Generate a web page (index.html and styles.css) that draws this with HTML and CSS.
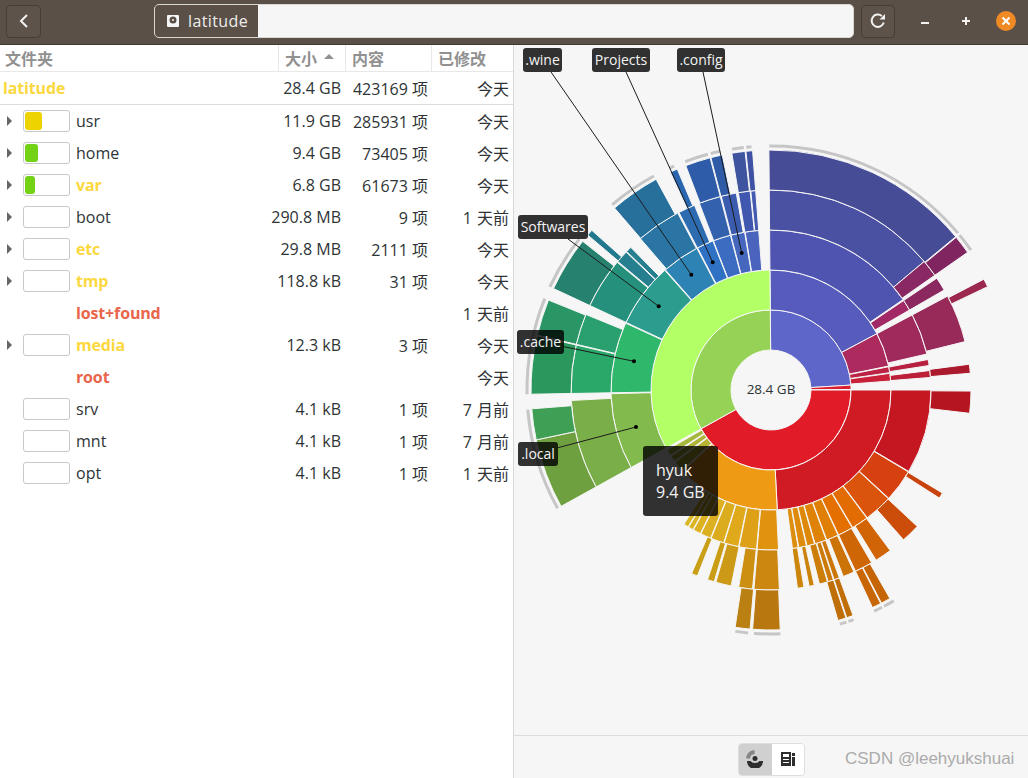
FILE: index.html
```html
<!DOCTYPE html>
<html>
<head>
    <title>latitude</title>
    <link rel="stylesheet" href="styles.css">
</head>
<body>

<!-- Header bar -->
<div class="headerbar">
    <button class="head-btn back-btn">
        <svg width="14" height="16" viewBox="0 0 14 16" fill="none"><path d="M10 2 L4 8 L10 14" stroke="#f4f2f0" stroke-width="2"/></svg>
    </button>
    <div class="location">
        <div class="crumb">
            <svg width="14" height="14" viewBox="0 0 14 14"><path fill-rule="evenodd" fill="#f6f6f6" d="M2 1h10a1 1 0 0 1 1 1v10a1 1 0 0 1-1 1H2a1 1 0 0 1-1-1V2a1 1 0 0 1 1-1zM7 2.500a3.500 3.500 0 1 0 0 7a3.500 3.500 0 0 0 0-7zM7 5a1 1 0 1 1 0 2a1 1 0 0 1 0-2z"/></svg>
            <span>latitude</span>
        </div>
    </div>
    <button class="head-btn reload-btn">
        <svg width="18" height="18" viewBox="0 0 18 18" fill="none"><path d="M14.800 10.500 A6.200 6.200 0 1 1 12.800 3.900" stroke="#f4f2f0" stroke-width="2"/><path d="M10.500 7.500 H16 V2 Z" fill="#f4f2f0"/></svg>
    </button>
    <div class="win-controls">
        <span class="win-btn"><svg width="10" height="10" viewBox="0 0 10 10"><rect x="1" y="6" width="8" height="2" fill="#f4f2f0"/></svg></span>
        <span class="win-btn"><svg width="10" height="10" viewBox="0 0 10 10"><path d="M1 5H9M5 1V9" stroke="#f4f2f0" stroke-width="2"/></svg></span>
        <span class="win-btn close"><svg width="10" height="10" viewBox="0 0 10 10"><path d="M1.500 1.500L8.500 8.500M8.500 1.500L1.500 8.500" stroke="#fff" stroke-width="2"/></svg></span>
    </div>
</div>

<div class="main">
    <!-- Folder list -->
    <div class="list-panel">
        <div class="row head">
            <div class="col-name">文件夹</div>
            <div class="col-size">大小 <i class="sort-up"></i></div>
            <div class="col-count">内容</div>
            <div class="col-date">已修改</div>
        </div>
        <div class="row root-row">
            <div class="col-name name yellow">latitude</div>
            <div class="col-size">28.4 GB</div>
            <div class="col-count">423169 项</div>
            <div class="col-date">今天</div>
        </div>
        <div class="row">
            <div class="col-name"><i class="arrow"></i><div class="bar"><div class="fill fill-yellow fill-42"></div></div><span class="name">usr</span></div>
            <div class="col-size">11.9 GB</div><div class="col-count">285931 项</div><div class="col-date">今天</div>
        </div>
        <div class="row">
            <div class="col-name"><i class="arrow"></i><div class="bar"><div class="fill fill-green fill-33"></div></div><span class="name">home</span></div>
            <div class="col-size">9.4 GB</div><div class="col-count">73405 项</div><div class="col-date">今天</div>
        </div>
        <div class="row">
            <div class="col-name"><i class="arrow"></i><div class="bar"><div class="fill fill-green fill-24"></div></div><span class="name yellow">var</span></div>
            <div class="col-size">6.8 GB</div><div class="col-count">61673 项</div><div class="col-date">今天</div>
        </div>
        <div class="row">
            <div class="col-name"><i class="arrow"></i><div class="bar"></div><span class="name">boot</span></div>
            <div class="col-size">290.8 MB</div><div class="col-count">9 项</div><div class="col-date">1 天前</div>
        </div>
        <div class="row">
            <div class="col-name"><i class="arrow"></i><div class="bar"></div><span class="name yellow">etc</span></div>
            <div class="col-size">29.8 MB</div><div class="col-count">2111 项</div><div class="col-date">今天</div>
        </div>
        <div class="row">
            <div class="col-name"><i class="arrow"></i><div class="bar"></div><span class="name yellow">tmp</span></div>
            <div class="col-size">118.8 kB</div><div class="col-count">31 项</div><div class="col-date">今天</div>
        </div>
        <div class="row">
            <div class="col-name"><i class="arrow blank"></i><div class="bar blank"></div><span class="name red">lost+found</span></div>
            <div class="col-size"></div><div class="col-count"></div><div class="col-date">1 天前</div>
        </div>
        <div class="row">
            <div class="col-name"><i class="arrow"></i><div class="bar"></div><span class="name yellow">media</span></div>
            <div class="col-size">12.3 kB</div><div class="col-count">3 项</div><div class="col-date">今天</div>
        </div>
        <div class="row">
            <div class="col-name"><i class="arrow blank"></i><div class="bar blank"></div><span class="name red">root</span></div>
            <div class="col-size"></div><div class="col-count"></div><div class="col-date">今天</div>
        </div>
        <div class="row">
            <div class="col-name"><i class="arrow blank"></i><div class="bar"></div><span class="name">srv</span></div>
            <div class="col-size">4.1 kB</div><div class="col-count">1 项</div><div class="col-date">7 月前</div>
        </div>
        <div class="row">
            <div class="col-name"><i class="arrow blank"></i><div class="bar"></div><span class="name">mnt</span></div>
            <div class="col-size">4.1 kB</div><div class="col-count">1 项</div><div class="col-date">7 月前</div>
        </div>
        <div class="row">
            <div class="col-name"><i class="arrow blank"></i><div class="bar"></div><span class="name">opt</span></div>
            <div class="col-size">4.1 kB</div><div class="col-count">1 项</div><div class="col-date">1 天前</div>
        </div>
    </div>

    <!-- Sunburst chart -->
    <div class="chart-panel">
        <div class="chart-area">
            <svg id="chart" class="chart-svg" width="514" height="690" viewBox="514 45 514 690"></svg>
            <div class="chart-total">28.4 GB</div>
            <div class="tag tag-wine">.wine</div>
            <div class="tag tag-projects">Projects</div>
            <div class="tag tag-config">.config</div>
            <div class="tag tag-softwares">Softwares</div>
            <div class="tag tag-cache">.cache</div>
            <div class="tag tag-local">.local</div>
            <div class="tooltip">hyuk<br>9.4 GB</div>
        </div>
        <div class="chart-foot">
            <div class="toggle">
                <span class="toggle-item active">
                    <svg width="18" height="18" viewBox="0 0 18 18" fill="none">
                        <path d="M8.500 2A7 7 0 0 0 2 8.500" stroke="#858585" stroke-width="4"/>
                        <path d="M1 11A8 8 0 0 0 17 11H13.500A5 3.500 0 0 1 4.500 11Z" fill="#2e2e2e"/>
                        <circle cx="9" cy="8.500" r="2.500" fill="#2e2e2e"/>
                    </svg>
                </span>
                <span class="toggle-item">
                    <svg width="14" height="14" viewBox="0 0 14 14"><path fill-rule="evenodd" fill="#2e2e2e" d="M0 0h10v14H0zM2 2v3h6V2zM2 7v1h6V7zM2 10v1h6v-1zM11 1h3v3h-3zM11 5h3v9h-3z"/></svg>
                </span>
            </div>
            <div class="watermark">CSDN @leehyukshuai</div>
        </div>
    </div>
</div>

<script src="chart.js"></script>
</body>
</html>
```

FILE: styles.css
```css
* {
    box-sizing: border-box;
}
html, body {
    height: 100%;
}
body {
    margin: 0;
    font-family: "Open Sans", "Noto Sans CJK SC", sans-serif;
    font-size: 16px;
    color: #2e3436;
    background-color: #f6f6f6;
    display: flex;
    flex-direction: column;
    overflow: hidden;
}

/* Header bar */
.headerbar {
    height: 45px;
    flex: none;
    display: flex;
    align-items: center;
    padding: 0 12px 2px 6px;
    background-color: #5a5048;
    border-bottom: 1px solid #40392f;
}
.head-btn {
    width: 35px;
    height: 33px;
    padding: 0;
    display: flex;
    align-items: center;
    justify-content: center;
    background-color: #5d534b;
    border: 1px solid #453d37;
    border-radius: 4px;
}
.location {
    width: 700px;
    height: 34px;
    margin-left: 113px;
    background-color: #f6f6f6;
    border: 1px solid #d9d7d4;
    border-radius: 5px;
    overflow: hidden;
}
.crumb {
    width: 103px;
    height: 100%;
    display: flex;
    align-items: center;
    gap: 8px;
    padding-left: 11px;
    letter-spacing: 0.4px;
    color: #f0eeec;
    background-color: #5a5048;
}
.reload-btn {
    width: 34px;
    margin-left: 7px;
}
.win-controls {
    margin-left: 11px;
    flex: 1;
    display: flex;
    align-items: center;
    justify-content: space-between;
    padding-left: 9px;
}
.win-btn {
    width: 20px;
    height: 20px;
    display: flex;
    align-items: center;
    justify-content: center;
}
.win-btn.close {
    border-radius: 50%;
    background-color: #f08a24;
}

/* Folder list */
.main {
    flex: 1;
    display: flex;
    min-height: 0;
}
.list-panel {
    width: 514px;
    flex: none;
    background-color: #ffffff;
    border-right: 1px solid #d8d8d8;
}
.row {
    display: grid;
    grid-template-columns: 279px 67px 86px 81px;
    height: 32px;
    align-items: center;
    white-space: nowrap;
}
.row.head {
    height: 27px;
    font-weight: 700;
    color: #919191;
    border-bottom: 1px solid #e8e8e8;
}
.row.head > div {
    height: 100%;
    display: flex;
    align-items: center;
    padding-left: 6px;
    padding-right: 0;
    justify-content: flex-start;
    border-right: 1px solid #e8e8e8;
}
.row.head > .col-name {
    padding-left: 5px;
}
.row.head > .col-date {
    border-right: none;
}
.row.root-row {
    height: 33px;
    border-bottom: 1px solid #dcdcdc;
}
.col-name {
    display: flex;
    align-items: center;
    padding-left: 7px;
}
.root-row .col-name {
    padding-left: 3px;
}
.col-size, .col-count, .col-date {
    display: flex;
    justify-content: flex-end;
}
.col-size {
    padding-right: 5px;
}
.col-count {
    padding-right: 4px;
}
.col-date {
    padding-right: 4px;
    word-spacing: 1px;
}
.sort-up {
    width: 0;
    height: 0;
    margin-left: 7px;
    margin-top: -3px;
    border-left: 5px solid transparent;
    border-right: 5px solid transparent;
    border-bottom: 5px solid #919191;
}
.arrow {
    width: 0;
    height: 0;
    flex: none;
    border-top: 5px solid transparent;
    border-bottom: 5px solid transparent;
    border-left: 5px solid #666;
}
.arrow.blank {
    border-left-color: transparent;
}
.bar {
    width: 47px;
    height: 22px;
    flex: none;
    margin-left: 11px;
    padding: 1px;
    border: 1px solid #c8c8c8;
    border-radius: 3px;
    background-color: #fff;
}
.bar.blank {
    border-color: transparent;
}
.fill {
    height: 100%;
    border-radius: 3px;
}
.fill-yellow {
    background-color: #edd400;
}
.fill-green {
    background-color: #73d216;
}
.fill-42 {
    width: 17px;
}
.fill-33 {
    width: 13px;
}
.fill-24 {
    width: 10px;
}
.name {
    margin-left: 6px;
}
.root-row .name {
    margin-left: 0;
}
.yellow {
    color: #fcd83f;
    font-weight: 700;
    letter-spacing: -0.15px;
}
.red {
    color: #e9654b;
    font-weight: 700;
    letter-spacing: -0.15px;
}

/* Chart */
.chart-panel {
    flex: 1;
    display: flex;
    flex-direction: column;
    min-width: 0;
}
.chart-area {
    position: relative;
    flex: 1;
}
.chart-svg {
    display: block;
}
.chart-total {
    position: absolute;
    left: 207px;
    top: 335px;
    width: 100px;
    text-align: center;
    font-size: 13.5px;
}
.tag {
    position: absolute;
    height: 24px;
    line-height: 24px;
    font-size: 14px;
    text-align: center;
    color: #f4f4f4;
    background-color: rgba(0, 0, 0, 0.8);
    border-radius: 3px;
}
.tag-wine {
    left: 9px;
    top: 3px;
    width: 39px;
}
.tag-projects {
    left: 78px;
    top: 3px;
    width: 58px;
}
.tag-config {
    left: 163px;
    top: 3px;
    width: 48px;
}
.tag-softwares {
    left: 4px;
    top: 170px;
    width: 70px;
}
.tag-cache {
    left: 3px;
    top: 285px;
    width: 47px;
}
.tag-local {
    left: 4px;
    top: 397px;
    width: 40px;
}
.tooltip {
    position: absolute;
    left: 129px;
    top: 401px;
    width: 75px;
    height: 70px;
    padding: 13px 13px;
    line-height: 22px;
    color: #f4f4f4;
    background-color: rgba(0, 0, 0, 0.8);
    border-radius: 3px;
}
.chart-foot {
    height: 43px;
    flex: none;
    display: flex;
    align-items: center;
    padding: 4px 0 0 224px;
    border-top: 1px solid #dcdcdc;
}
.toggle {
    display: flex;
    width: 67px;
    height: 33px;
    border: 1px solid #dedede;
    border-radius: 4px;
    overflow: hidden;
}
.toggle-item {
    flex: 1;
    display: flex;
    align-items: center;
    justify-content: center;
    background-color: #ffffff;
}
.toggle-item.active {
    background-color: #d0d0d0;
}
.watermark {
    margin-left: 40px;
    font-family: "Liberation Sans", sans-serif;
    font-size: 17px;
    color: #ababab;
}
```

FILE: chart.js
```js
// sunburst, angles in degrees clockwise from 12 o'clock
const CX = 771, CY = 390;

// [inner radius, from, to, colour]
const segments = [
    // purple / magenta side
    [40, -0.5, 86.5, '#5f66c9'], [40, 86.5, 89.6, '#dd1d30'],
    [80, -0.5, 62, '#565bbc'], [80, 62, 78.5, '#ad2a5e'], [80, 78.8, 81.7, '#bb2244'], [80, 82, 85.7, '#c9213a'],
    [120, -0.5, 55.6, '#4e54b0'], [120, 56, 60, '#a32866'], [120, 62, 77, '#a12a5d'], [120, 79, 81.2, '#b8203f'], [120, 83, 85.5, '#bd1f38'],
    [160, -0.5, 50, '#4a50a2'], [160, 50, 55, '#8a2863'], [160, 56, 60, '#8c2860'], [160, 62, 76, '#982a5a'], [160, 82.6, 85.2, '#aa1a2c'],
    [200, -0.5, 50.3, '#464c96'], [200, 50.5, 55, '#80255f'], [200, 62.5, 64.5, '#9c2850'],

    // red side
    [40, 90, 241, '#e21b28'],
    [80, 90, 177, '#d01b24'],
    [120, 90, 120.6, '#c51722'], [120, 120.8, 132.6, '#d6410f'], [120, 132.8, 143, '#da540c'], [120, 143.2, 149.3, '#e36c02'],
    [120, 149.5, 155, '#e57002'], [120, 155.2, 159.6, '#df7f06'], [120, 159.8, 164, '#df8208'], [120, 164.2, 167, '#de880a'],
    [120, 167.2, 170, '#de8a0c'], [120, 170.2, 172.3, '#dd8e0e'],
    [160, 90.3, 96.7, '#b41520'], [160, 121, 122.7, '#c9430d'], [160, 133, 138.5, '#cc4c09'], [160, 143.4, 148.3, '#d06406'],
    [160, 149.8, 155, '#cf6605'], [160, 155.5, 158.8, '#cc7307'], [160, 160, 161.6, '#cc7607'], [160, 161.8, 163.4, '#cc7a08'],
    [160, 163.6, 166, '#cc7e09'], [160, 167.5, 169, '#cc830b'], [160, 170.5, 172.4, '#cc860c'],
    [200, 150.3, 152.6, '#c56505'], [200, 152.8, 155, '#c86606'], [200, 160, 161.6, '#c06e08'], [200, 161.8, 163.8, '#c06e08'],

    // orange / yellow side
    [80, 177, 227.5, '#ee9a14'], [80, 228, 233, '#b8b332'], [80, 233.5, 236.5, '#aeb438'], [80, 237, 240, '#a6b83c'],
    [120, 177.3, 185, '#e0930f'], [120, 185.2, 191.5, '#dda017'], [120, 191.7, 197, '#dfa91b'], [120, 197.2, 202, '#dcac1f'],
    [120, 202.2, 206, '#dcb020'], [120, 206.2, 209, '#dcb222'], [120, 209.2, 211, '#dcb524'], [120, 211.2, 213, '#dbb726'],
    [160, 177.6, 184.9, '#cc8710'], [160, 185.3, 189.3, '#cc8f12'], [160, 191.5, 196, '#cc9a16'], [160, 196.5, 198.5, '#cb9d15'], [160, 201.6, 203.4, '#c99f15'],
    [200, 177.8, 184.4, '#b9780f'], [200, 185, 188.6, '#bb8012'],

    // green / teal side
    [40, 241, 359.5, '#96d255'],
    [80, 241, 359.5, '#b3ff66'],
    [120, 241, 268.7, '#82ba4e'], [120, 269, 294.7, '#2fb86b'], [120, 295, 318.4, '#2b9c8e'], [120, 318.7, 332.4, '#2d83b3'],
    [120, 332.7, 338.7, '#2f72c4'], [120, 338.9, 345.3, '#3b6cc2'], [120, 345.5, 350.5, '#4567be'], [120, 350.7, 355.6, '#4a63bd'],
    [160, 241, 267, '#7aae48'], [160, 269, 283, '#2aa86a'], [160, 283.2, 292.2, '#2aa06e'], [160, 295, 309.7, '#25917d'],
    [160, 310, 313.6, '#267f8f'], [160, 313.8, 315.5, '#267f8f'], [160, 319.2, 332.2, '#2a75a3'], [160, 332.6, 337.5, '#2e6cb2'],
    [160, 339, 345.3, '#3361ad'], [160, 345.6, 350, '#3a5bae'], [160, 350.6, 354, '#3f57ae'], [160, 354.2, 355.6, '#4459b0'],
    [200, 241, 258, '#6ea03f'], [200, 258, 265.5, '#3f9f55'], [200, 269, 283, '#2a985c'], [200, 283.2, 292, '#2a9665'],
    [200, 295, 308.3, '#26826f'], [200, 310.2, 311.7, '#22788c'], [200, 319.3, 331.4, '#27709c'], [200, 335.2, 337, '#2a67ae'],
    [200, 339.2, 345.3, '#2e5ca8'], [200, 345.5, 348.3, '#2f5aa5'], [200, 350.6, 353.8, '#3f549e'], [200, 354, 355.6, '#3e51a3'],
];

// grey marks round the segments that go deeper than the chart shows
const edges = [
    [-0.4, 50], [50.6, 55], [149.8, 152.4], [152.9, 155], [160.2, 161.5], [162, 163.6], [177.8, 184], [185.4, 188.4],
    [241, 265.4], [269, 292], [295, 308.2], [319.4, 331.3], [335.4, 336.6], [339.4, 345], [345.7, 348], [350.8, 353.6], [354.2, 355.4],
];

// label leader lines: from the label to a dot on the segment
const leaders = [
    [551, 72, 691.3, 274.7],
    [626, 72, 712.7, 262.3],
    [703, 72, 741.7, 253],
    [568, 239, 658.7, 306.3],
    [564, 346.7, 634, 361.3],
    [558, 447.7, 636, 427],
];

function pt(r, deg) {
    const a = deg * Math.PI / 180;
    return (CX + r * Math.sin(a)).toFixed(2) + ' ' + (CY - r * Math.cos(a)).toFixed(2);
}

function arc(r, from, to, sweep) {
    const large = Math.abs(to - from) > 180 ? 1 : 0;
    return `A${r} ${r} 0 ${large} ${sweep} ${pt(r, to)}`;
}

let out = '';
segments.forEach(([r, from, to, color]) => {
    const d = `M${pt(r, from)} L${pt(r + 40, from)} ${arc(r + 40, from, to, 1)} L${pt(r, to)} ${arc(r, to, from, 0)} Z`;
    out += `<path d="${d}" fill="${color}" stroke="#f6f6f6" stroke-width="1"/>`;
});
edges.forEach(([from, to]) => {
    out += `<path d="M${pt(244, from)} ${arc(244, from, to, 1)}" fill="none" stroke="#c6c6c6" stroke-width="3"/>`;
});
leaders.forEach(([x1, y1, x2, y2]) => {
    out += `<line x1="${x1}" y1="${y1}" x2="${x2}" y2="${y2}" stroke="#1c1c1c" stroke-width="1"/>`;
    out += `<circle cx="${x2}" cy="${y2}" r="2" fill="#000"/>`;
});
document.getElementById('chart').innerHTML = out;
```
